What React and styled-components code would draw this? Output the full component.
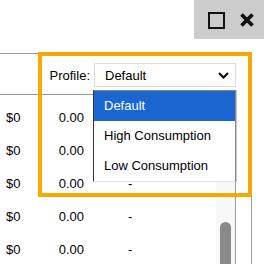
import styled, { createGlobalStyle } from 'styled-components'

const Global = createGlobalStyle`
  html, body {
    margin: 0;
    padding: 0;
    background: #fff;
  }
  body {
    font-family: "Liberation Sans", Arial, sans-serif;
    font-size: 13px;
    color: #000;
  }
`

const Screen = styled.div`
  position: relative;
  width: 264px;
  height: 264px;
  overflow: hidden;
  background: #fff;
`

const TitleBar = styled.div`
  height: 39px;
  display: flex;
  justify-content: flex-end;
`

const Controls = styled.div`
  width: 70px;
  background: #cccccc;
  display: flex;
  align-items: center;
  padding-left: 14px;
  gap: 14px;
  box-sizing: border-box;
`

const MaxBox = styled.div`
  width: 17px;
  height: 17px;
  box-sizing: border-box;
  border: 2px solid #111;
  margin-top: 1px;
`

const Pane = styled.div`
  margin-top: 14px;
  width: 252px;
  height: 211px;
  box-sizing: border-box;
  border-top: 1px solid #9a9a9a;
  border-right: 1px solid #9a9a9a;
  display: grid;
  grid-template-columns: 216px 20px 15px;
  grid-template-rows: 41px 1fr;
`

const Header = styled.div`
  grid-column: 1 / 3;
  grid-row: 1;
  display: flex;
  justify-content: flex-end;
  align-items: center;
  gap: 4px;
  padding-top: 2px;
  box-sizing: border-box;
  border-bottom: 1px solid #9a9a9a;
`

const Label = styled.span`
  color: #000;
`

const Select = styled.div`
  width: 142px;
  height: 24px;
  box-sizing: border-box;
  border: 1px solid #dcdcdc;
  display: flex;
  align-items: center;
  justify-content: space-between;
  padding: 0 6px 0 10px;
  background: #fff;
`

const Rows = styled.div`
  grid-column: 1;
  grid-row: 2;
  padding-top: 6px;
`

const Row = styled.div`
  height: 33px;
  display: grid;
  grid-template-columns: 40px 38px 1fr;
  align-items: center;
  padding-left: 6px;
`

const Cell = styled.span`
  text-align: ${(p) => (p.$right ? 'right' : 'left')};
  padding-left: ${(p) => p.$pad || 0}px;
`

const Track = styled.div`
  grid-column: 2;
  grid-row: 2;
  background: #f8f8f8;
  border-right: 1px solid #999;
  padding-left: 4px;
`

const Thumb = styled.div`
  width: 11px;
  height: 60px;
  margin-top: 127px;
  background: #8a8a8a;
  border-radius: 6px 6px 0 0;
`

const Highlight = styled.div`
  position: absolute;
  left: 38px;
  top: 52px;
  width: 214px;
  height: 145px;
  box-sizing: border-box;
  border: 4px solid #f7a900;
  pointer-events: none;
`

const Menu = styled.ul`
  position: absolute;
  left: 93px;
  top: 90px;
  width: 143px;
  margin: 0;
  padding: 0;
  list-style: none;
  background: #fff;
  box-sizing: border-box;
  border-top: 1px solid #888;
  border-left: 1px solid #333;
  border-right: 1px solid #888;
  border-bottom: 1px solid #e2e2e2;
  box-shadow: 1px 0 0 #c8c8c8;
`

const Item = styled.li`
  height: 30px;
  line-height: 30px;
  padding-left: 10px;
  background: ${(p) => (p.$active ? '#1b66d1' : '#fff')};
  color: ${(p) => (p.$active ? '#fff' : '#000')};
`

const Chevron = () => (
  <svg width="11" height="7" viewBox="0 0 11 7">
    <polyline points="1,1 5.5,5.5 10,1" fill="none" stroke="#111" strokeWidth="2.2" />
  </svg>
)

const CloseIcon = () => (
  <svg width="16" height="16" viewBox="0 0 16 16">
    <path d="M2.5 2.5 L13.5 13.5 M13.5 2.5 L2.5 13.5" stroke="#111" strokeWidth="3.8" strokeLinecap="butt" />
  </svg>
)

const rows = [0, 1, 2, 3, 4]

export default function App() {
  return (
    <Screen>
      <Global />
      <TitleBar>
        <Controls>
          <MaxBox />
          <CloseIcon />
        </Controls>
      </TitleBar>
      <Pane>
        <Header>
          <Label>Profile:</Label>
          <Select>
            <span>Default</span>
            <Chevron />
          </Select>
        </Header>
        <Rows>
          {rows.map((i) => (
            <Row key={i}>
              <Cell>$0</Cell>
              <Cell $right>0.00</Cell>
              <Cell $pad={44}>-</Cell>
            </Row>
          ))}
        </Rows>
        <Track>
          <Thumb />
        </Track>
      </Pane>
      <Highlight />
      <Menu>
        <Item $active>Default</Item>
        <Item>High Consumption</Item>
        <Item>Low Consumption</Item>
      </Menu>
    </Screen>
  )
}
